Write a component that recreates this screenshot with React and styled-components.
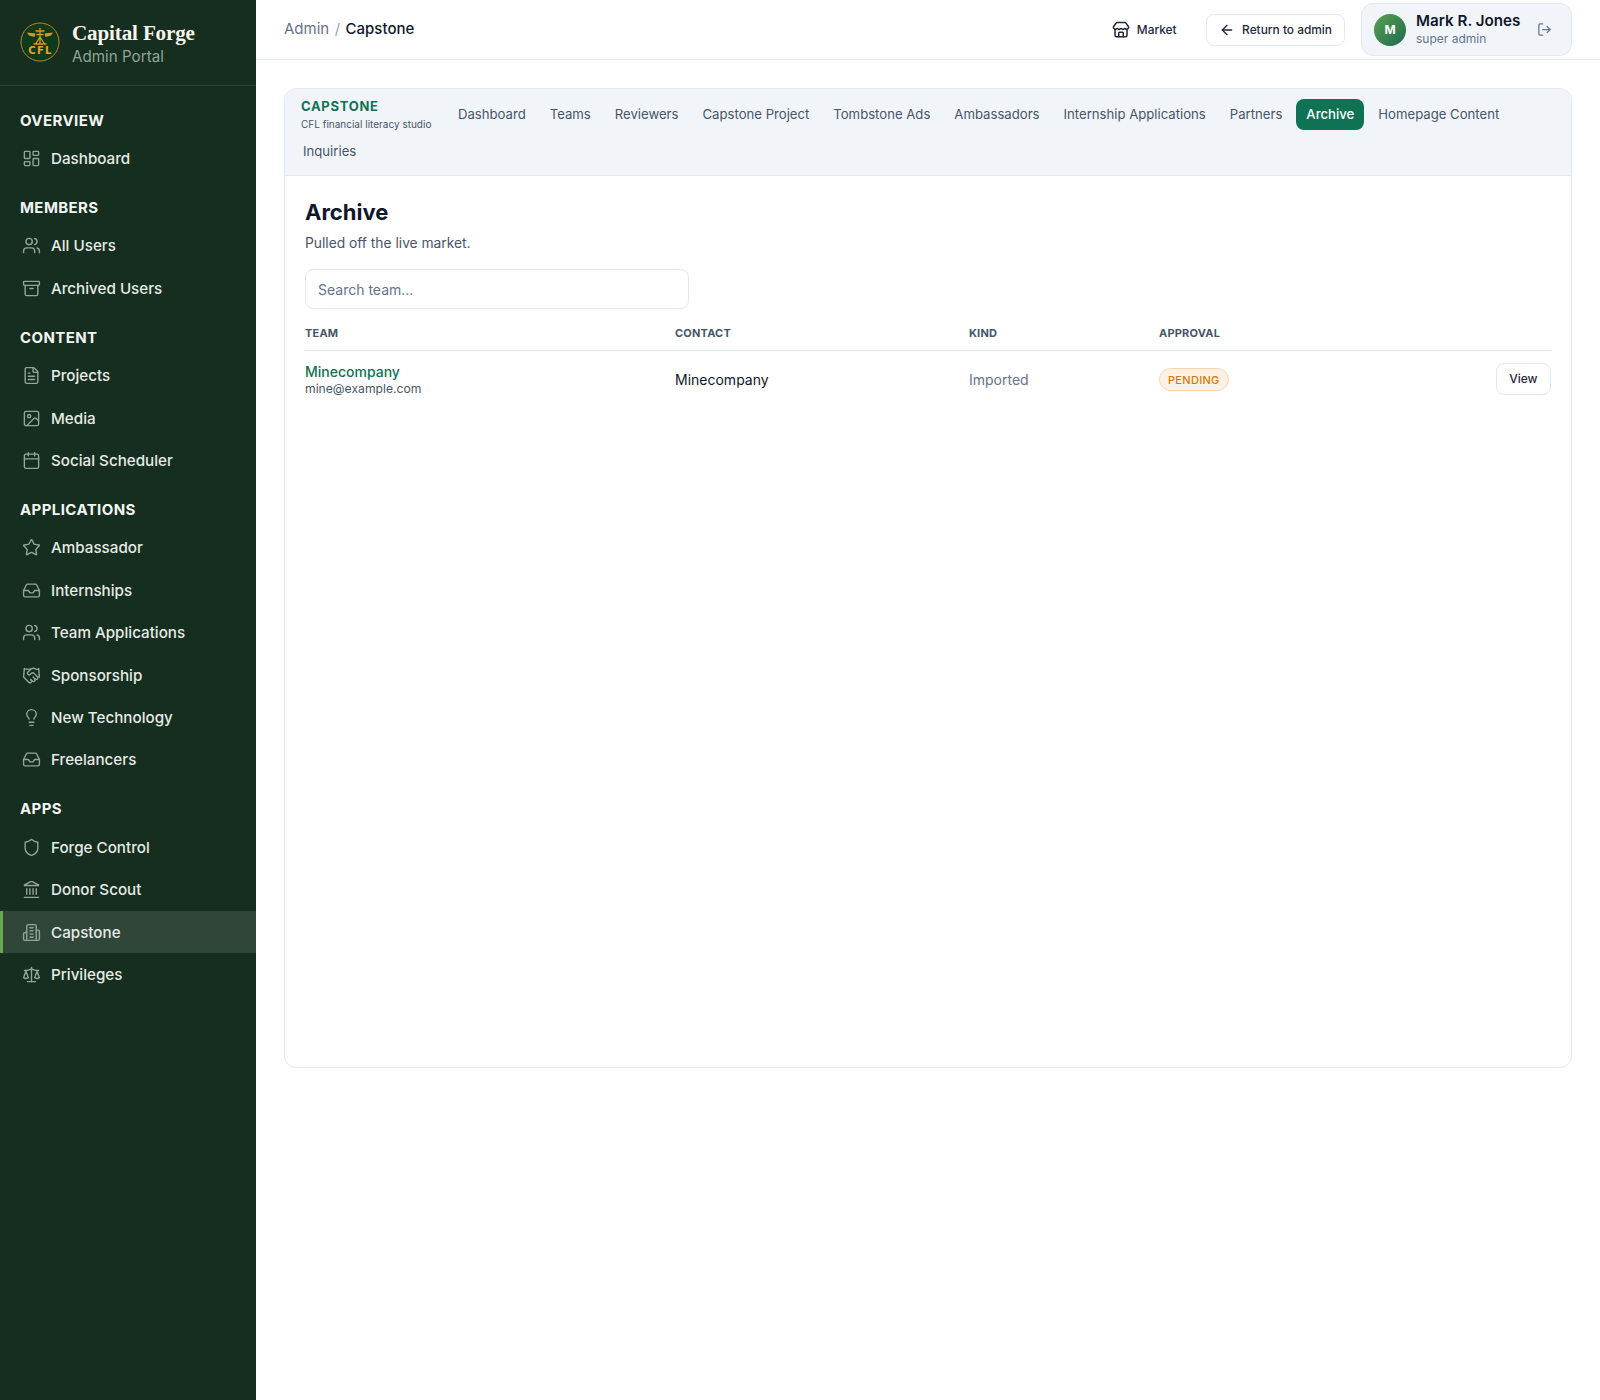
import React from "react";
import styled, { createGlobalStyle } from "styled-components";
import {
  LayoutDashboard, Users, Archive, FileText, Image, Calendar, Star, Inbox, Handshake,
  Lightbulb, Shield, Landmark, Scale, Store, ArrowLeft, LogOut,
} from "lucide-react";

const GlobalStyle = createGlobalStyle`
  * { box-sizing: border-box; }
  html, body { margin: 0; padding: 0; }
  body {
    font-family: Inter, "Liberation Sans", sans-serif;
    background: #ffffff;
    color: #0f172a;
  }
`;

const Page = styled.div`
  display: flex;
  min-height: 1400px;
`;

const Sidebar = styled.aside`
  width: 256px;
  flex-shrink: 0;
  background: #162e1f;
`;

const Brand = styled.div`
  height: 86px;
  display: flex;
  align-items: center;
  gap: 12px;
  padding: 0 20px 1px;
  border-bottom: 1px solid #2e4436;
`;

const BrandText = styled.div`
  padding-top: 3px;
`;

const BrandName = styled.div`
  font-family: "Liberation Serif", "DejaVu Serif", serif;
  font-size: 21.1px;
  font-weight: 700;
  letter-spacing: -0.15px;
  line-height: 26px;
  color: #f8f5ec;
`;

const BrandSub = styled.div`
  font-size: 15.2px;
  line-height: 20px;
  margin-top: 1.5px;
  color: #8fa596;
`;

const Nav = styled.nav`
  padding-top: 14px;
`;

const Section = styled.div`
  padding-bottom: 7.3px;
`;

const SectionTitle = styled.div`
  height: 37.5px;
  padding: 11px 20px 0;
  font-size: 15px;
  line-height: 20px;
  font-weight: 700;
  letter-spacing: 0.4px;
  color: #f3f6f3;
`;

const NavRow = styled.div`
  height: 42.45px;
  display: flex;
  align-items: center;
  gap: 10px;
  padding-left: ${(p) => (p.$active ? "19px" : "22px")};
  border-left: ${(p) => (p.$active ? "3px solid #6aa84f" : "0")};
  background: ${(p) => (p.$active ? "#304638" : "transparent")};
  font-size: 15.2px;
  font-weight: 500;
  color: #e6ebe7;
  svg {
    width: 19px;
    height: 19px;
    color: #93a599;
    flex-shrink: 0;
  }
`;

const Main = styled.main`
  flex: 1;
  min-width: 0;
`;

const Topbar = styled.header`
  height: 60px;
  display: flex;
  align-items: center;
  justify-content: space-between;
  padding: 0 28px;
  border-bottom: 1px solid #e2e8f0;
`;

const Crumbs = styled.div`
  display: flex;
  align-items: center;
  gap: 5.5px;
  padding-bottom: 2px;
  font-size: 15px;
  color: #64748b;
  b {
    font-weight: 500;
    color: #0f172a;
  }
  i {
    font-style: normal;
    color: #94a3b8;
  }
`;

const TopActions = styled.div`
  display: flex;
  align-items: center;
  gap: 16px;
`;

const TopLink = styled.div`
  display: flex;
  align-items: center;
  gap: ${(p) => (p.$outlined ? "7.5px" : "7px")};
  height: 32px;
  padding: 0 12px;
  font-size: 11.9px;
  font-weight: 500;
  color: #1e293b;
  border-radius: 8px;
  border: 1px solid ${(p) => (p.$outlined ? "#e2e8f0" : "transparent")};
  svg {
    width: ${(p) => (p.$outlined ? "16px" : "18px")};
    height: ${(p) => (p.$outlined ? "16px" : "18px")};
  }
`;

const UserCard = styled.div`
  width: 211px;
  height: 53px;
  display: flex;
  align-items: center;
  gap: 10px;
  padding: 0 12px;
  background: #f1f5f9;
  border: 1px solid #e2e8f0;
  border-radius: 12px;
  svg {
    width: 15px;
    height: 15px;
    color: #64748b;
    margin-left: 7px;
  }
`;

const Avatar = styled.div`
  width: 32px;
  height: 32px;
  border-radius: 50%;
  display: flex;
  align-items: center;
  justify-content: center;
  background: linear-gradient(135deg, #5aa04f, #1c6b52);
  color: #ffffff;
  font-size: 12px;
  font-weight: 700;
`;

const UserName = styled.div`
  font-size: 15.2px;
  font-weight: 600;
  line-height: 19px;
  color: #0f172a;
  white-space: nowrap;
`;

const UserRole = styled.div`
  font-size: 12px;
  line-height: 18px;
  color: #64748b;
`;

const Content = styled.div`
  padding: 28px;
`;

const Card = styled.section`
  height: 980px;
  border: 1px solid #e2e8f0;
  border-radius: 12px;
  overflow: hidden;
`;

const Tabs = styled.div`
  height: 87px;
  padding: 10px 16px 0;
  display: flex;
  flex-wrap: wrap;
  align-content: flex-start;
  row-gap: 6px;
  background: #f1f5f9;
  border-bottom: 1px solid #e2e8f0;
`;

const TabsTitle = styled.div`
  height: 31px;
  margin-right: 16.500px;
  margin-top: -1px;
`;

const TabsName = styled.div`
  font-size: 13px;
  font-weight: 700;
  line-height: 16px;
  letter-spacing: 0.7px;
  color: #0f7255;
`;

const TabsSub = styled.div`
  margin-top: 2px;
  font-size: 10px;
  line-height: 16px;
  color: #475569;
`;

const Tab = styled.div`
  height: 31px;
  display: flex;
  align-items: center;
  padding: 0 10px 1px;
  margin-right: 4px;
  border-radius: 8px;
  font-size: 13.15px;
  font-weight: ${(p) => (p.$active ? 500 : 400)};
  color: ${(p) => (p.$active ? "#ffffff" : "#475569")};
  background: ${(p) => (p.$active ? "#0f7255" : "transparent")};
  &:last-child {
    margin-left: -8px;
  }
`;

const Body = styled.div`
  padding: 20px;
`;

const Title = styled.h1`
  margin: 0;
  font-size: 22px;
  line-height: 32px;
  font-weight: 700;
  color: #0f172a;
`;

const Subtitle = styled.p`
  margin: 5px 0 0;
  font-size: 13.8px;
  line-height: 20px;
  color: #475569;
`;

const Search = styled.input`
  display: block;
  width: 384px;
  height: 40px;
  margin-top: 16px;
  padding: 0 12px;
  border: 1px solid #e2e8f0;
  border-radius: 8px;
  font: 400 14px Inter, sans-serif;
  color: #0f172a;
  &::placeholder {
    color: #64748b;
    opacity: 1;
  }
`;

const Grid = styled.div`
  display: grid;
  grid-template-columns: 370px 294px 190px 1fr auto;
  align-items: center;
`;

const HeadRow = styled(Grid)`
  height: 42px;
  padding-top: 7px;
  border-bottom: 1px solid #e2e8f0;
  font-size: 11px;
  font-weight: 700;
  letter-spacing: 0.2px;
  color: #475569;
`;

const DataRow = styled(Grid)`
  height: 57px;
  font-size: 14px;
`;

const TeamName = styled.div`
  padding-top: 1px;
  font-size: 14px;
  font-weight: 500;
  line-height: 18px;
  color: #0f7255;
`;

const TeamMail = styled.div`
  font-size: 12.16px;
  line-height: 16px;
  color: #475569;
`;

const Kind = styled.div`
  color: #64748b;
`;

const Badge = styled.span`
  display: inline-flex;
  align-items: center;
  height: 23px;
  padding: 0 8px;
  border: 1px solid #f8d7ae;
  border-radius: 999px;
  background: #fdf1e3;
  color: #d97706;
  font-size: 11px;
  font-weight: 450;
  letter-spacing: 0.3px;
`;

const ViewButton = styled.div`
  height: 32px;
  margin-bottom: 1px;
  display: flex;
  align-items: center;
  padding: 0 12.5px 1px;
  border: 1px solid #e2e8f0;
  border-radius: 8px;
  font-size: 12px;
  font-weight: 500;
  color: #1e293b;
`;

function LogoMark() {
  return (
    <svg width="40" height="40" viewBox="0 0 40 40" style={{ flexShrink: 0 }}>
      <circle cx="20" cy="20" r="19" fill="#0e3a1e" stroke="#b88a24" strokeWidth="1" />
      <g stroke="#d49a1e" strokeWidth="1.3" fill="none">
        <path d="M20 6v16M15.500 9h9M16.500 12.500h7M15.500 22l4.500-7 4.500 7M13.500 22h13" />
      </g>
      <path d="M7 10.500l8.500 1-1 3.500-5.500-1.500zM33 10.500l-8.500 1 1 3.500 5.500-1.500z" fill="#d49a1e" />
      <text x="20.500" y="32" textAnchor="middle" fontFamily="DejaVu Sans, sans-serif" fontSize="10" fontWeight="700" letterSpacing="1.300" fill="#e5a520">CFL</text>
    </svg>
  );
}

function CapstoneIcon(props) {
  return (
    <svg viewBox="0 0 24 24" fill="none" stroke="currentColor" strokeWidth="1.75" strokeLinecap="round" strokeLinejoin="round" {...props}>
      <path d="M6 22V4a2 2 0 0 1 2-2h8a2 2 0 0 1 2 2v18Z" />
      <path d="M6 12H4a2 2 0 0 0-2 2v6a2 2 0 0 0 2 2h2" />
      <path d="M18 9h2a2 2 0 0 1 2 2v9a2 2 0 0 1-2 2h-2" />
      <path d="M10 6h4M10 10h4M10 14h4M10 18h4" />
    </svg>
  );
}

const nav = [
  { title: "OVERVIEW", items: [["Dashboard", LayoutDashboard]] },
  { title: "MEMBERS", items: [["All Users", Users], ["Archived Users", Archive]] },
  { title: "CONTENT", items: [["Projects", FileText], ["Media", Image], ["Social Scheduler", Calendar]] },
  {
    title: "APPLICATIONS",
    items: [
      ["Ambassador", Star], ["Internships", Inbox], ["Team Applications", Users],
      ["Sponsorship", Handshake], ["New Technology", Lightbulb], ["Freelancers", Inbox],
    ],
  },
  { title: "APPS", items: [["Forge Control", Shield], ["Donor Scout", Landmark], ["Capstone", CapstoneIcon], ["Privileges", Scale]] },
];

const tabs = [
  "Dashboard", "Teams", "Reviewers", "Capstone Project", "Tombstone Ads", "Ambassadors",
  "Internship Applications", "Partners", "Archive", "Homepage Content", "Inquiries",
];

export default function App() {
  return (
    <Page>
      <GlobalStyle />
      <Sidebar>
        <Brand>
          <LogoMark />
          <BrandText>
            <BrandName>Capital Forge</BrandName>
            <BrandSub>Admin Portal</BrandSub>
          </BrandText>
        </Brand>
        <Nav>
          {nav.map((s) => (
            <Section key={s.title}>
              <SectionTitle>{s.title}</SectionTitle>
              {s.items.map(([label, Icon]) => (
                <NavRow key={label} $active={label === "Capstone"}>
                  <Icon strokeWidth={1.75} />
                  {label}
                </NavRow>
              ))}
            </Section>
          ))}
        </Nav>
      </Sidebar>
      <Main>
        <Topbar>
          <Crumbs>
            Admin <i>/</i> <b>Capstone</b>
          </Crumbs>
          <TopActions>
            <TopLink><Store />Market</TopLink>
            <TopLink $outlined><ArrowLeft />Return to admin</TopLink>
            <UserCard>
              <Avatar>M</Avatar>
              <div>
                <UserName>Mark R. Jones</UserName>
                <UserRole>super admin</UserRole>
              </div>
              <LogOut />
            </UserCard>
          </TopActions>
        </Topbar>
        <Content>
          <Card>
            <Tabs>
              <TabsTitle>
                <TabsName>CAPSTONE</TabsName>
                <TabsSub>CFL financial literacy studio</TabsSub>
              </TabsTitle>
              {tabs.map((t) => (
                <Tab key={t} $active={t === "Archive"}>{t}</Tab>
              ))}
            </Tabs>
            <Body>
              <Title>Archive</Title>
              <Subtitle>Pulled off the live market.</Subtitle>
              <Search placeholder="Search team..." />
              <HeadRow>
                <div>TEAM</div>
                <div>CONTACT</div>
                <div>KIND</div>
                <div>APPROVAL</div>
                <div />
              </HeadRow>
              <DataRow>
                <div>
                  <TeamName>Minecompany</TeamName>
                  <TeamMail>mine@example.com</TeamMail>
                </div>
                <div>Minecompany</div>
                <Kind>Imported</Kind>
                <div><Badge>PENDING</Badge></div>
                <ViewButton>View</ViewButton>
              </DataRow>
            </Body>
          </Card>
        </Content>
      </Main>
    </Page>
  );
}
